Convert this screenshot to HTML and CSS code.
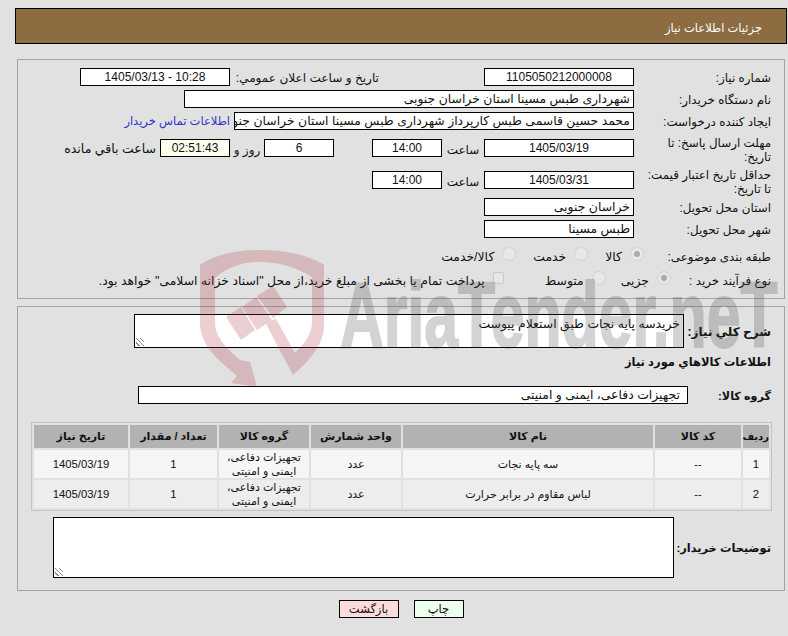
FILE: index.html
```html
<!DOCTYPE html>
<html lang="fa" dir="rtl">
<head>
    <meta charset="UTF-8">
    <title>جزئیات اطلاعات نیاز</title>
    <link rel="stylesheet" href="styles.css">
</head>
<body>
<div class="page">
    <div class="title-bar">جزئیات اطلاعات نیاز</div>

    <div class="panel top-panel">
        <div class="row">
            <label class="lbl">شماره نیاز:</label>
            <div class="box w150 center">1105050212000008</div>
            <label class="lbl-public">تاریخ و ساعت اعلان عمومي:</label>
            <div class="box w150 center">10:28 - 1405/03/13</div>
        </div>
        <div class="row">
            <label class="lbl">نام دستگاه خریدار:</label>
            <div class="box w450">شهرداری طبس مسینا استان خراسان جنوبی</div>
        </div>
        <div class="row">
            <label class="lbl">ایجاد کننده درخواست:</label>
            <div class="box w400">محمد حسین قاسمی طبس کارپرداز شهرداری طبس مسینا استان خراسان جنوبی</div>
            <a class="contact" href="#">اطلاعات تماس خریدار</a>
        </div>
        <div class="row row-tall row-deadline">
            <label class="lbl">مهلت ارسال پاسخ: تا<br>تاریخ:</label>
            <div class="box w150 center">1405/03/19</div>
            <span class="word">ساعت</span>
            <div class="box w70 center">14:00</div>
            <div class="box w70 center days">6</div>
            <span class="word word-days">روز و</span>
            <div class="box w70 center timer">02:51:43</div>
            <span class="word-left">ساعت باقي مانده</span>
        </div>
        <div class="row row-tall row-validity">
            <label class="lbl">حداقل تاریخ اعتبار قیمت:<br>تا تاریخ:</label>
            <div class="box w150 center">1405/03/31</div>
            <span class="word">ساعت</span>
            <div class="box w70 center">14:00</div>
        </div>
        <div class="row">
            <label class="lbl">استان محل تحویل:</label>
            <div class="box w150">خراسان جنوبی</div>
        </div>
        <div class="row">
            <label class="lbl">شهر محل تحویل:</label>
            <div class="box w150">طبس مسینا</div>
        </div>
        <div class="row row-subject">
            <label class="lbl">طبقه بندی موضوعی:</label>
            <span class="radio on"></span><span class="opt">کالا</span>
            <span class="radio"></span><span class="opt">خدمت</span>
            <span class="radio"></span><span class="opt">کالا/خدمت</span>
        </div>
        <div class="row row-process">
            <label class="lbl">نوع فرآیند خرید :</label>
            <span class="radio on"></span><span class="opt">جزیی</span>
            <span class="radio"></span><span class="opt opt-mid">متوسط</span>
            <span class="check"></span><span class="opt">پرداخت تمام یا بخشی از مبلغ خرید،از محل "اسناد خزانه اسلامی" خواهد بود.</span>
        </div>
    </div>

    <div class="panel bottom-panel">
        <div class="desc-row">
            <label class="lbl-bold">شرح کلي نیاز:</label>
            <div class="area area-desc">خریدسه پایه نجات طبق استعلام پیوست<span class="grip"></span></div>
        </div>
        <h4 class="section-title">اطلاعات کالاهاي مورد نیاز</h4>
        <div class="group-row">
            <label class="lbl-bold">گروه کالا:</label>
            <div class="box group-box">تجهیزات دفاعی، ایمنی و امنیتی</div>
        </div>
        <table class="items">
            <thead>
                <tr>
                    <th class="c-num">ردیف</th>
                    <th class="c-code">کد کالا</th>
                    <th class="c-name">نام کالا</th>
                    <th class="c-unit">واحد شمارش</th>
                    <th class="c-group">گروه کالا</th>
                    <th class="c-qty">تعداد / مقدار</th>
                    <th class="c-date">تاریخ نیاز</th>
                </tr>
            </thead>
            <tbody>
                <tr>
                    <td class="num">1</td>
                    <td>--</td>
                    <td>سه پایه نجات</td>
                    <td>عدد</td>
                    <td>تجهیزات دفاعی، ایمنی و امنیتی</td>
                    <td class="num">1</td>
                    <td class="num">1405/03/19</td>
                </tr>
                <tr>
                    <td class="num">2</td>
                    <td>--</td>
                    <td>لباس مقاوم در برابر حرارت</td>
                    <td>عدد</td>
                    <td>تجهیزات دفاعی، ایمنی و امنیتی</td>
                    <td class="num">1</td>
                    <td class="num">1405/03/19</td>
                </tr>
            </tbody>
        </table>
        <div class="buyer-row">
            <label class="lbl-bold">توضیحات خریدار:</label>
            <div class="area area-buyer"><span class="grip"></span></div>
        </div>
    </div>

    <div class="buttons">
        <button type="button" class="btn btn-print">چاپ</button>
        <button type="button" class="btn btn-back">بازگشت</button>
    </div>
</div>

<!-- watermark lies over the form, see-through -->
<div class="watermark">
    <svg class="wm-shield" width="135" height="145" viewBox="195 245 135 145">
        <path d="M260 250 C285 250 308 255 324 265 L324 325 C324 345 308 362 293 375 L265 322 L276 319 L295 353 C305 343 312 334 312 322 L312 277 C296 267 278 262 260 262 C242 262 228 267 215 278 L215 323 C215 337 228 350 240 360 L250 362 L257 387 L231 383 L237 376 C218 360 200 345 200 323 L200 265 C215 255 235 250 260 250 Z"/>
        <path d="M226 317 L241 307 L255 330 L241 340 Z M242 307 L256 297 L272 320 L257 330 Z M257 296 L273 286 L287 307 L273 318 Z"/>
    </svg>
    <span class="wm-text">AriaTender.neT</span>
</div>
</body>
</html>
```

FILE: styles.css
```css
html, body { margin: 0; padding: 0; }
body { background-color: #e1e1e1; font-family: "Liberation Sans", "DejaVu Sans", sans-serif; font-size: 12.4px; color: #111; width: 788px; height: 636px; overflow: hidden; position: relative; }
.page { padding: 8px 3px 0 17px; }

.title-bar { background-color: #8d6c42; border: 1px solid #000; height: 34px; line-height: 38px; color: #fff; font-size: 11.5px; padding-right: 24px; margin: 0 -2px; }

.panel { border: 1px solid #a3a3a3; box-sizing: border-box; }
.top-panel { margin-top: 15px; height: 240px; padding-top: 8px; }
.bottom-panel { margin-top: 7px; height: 285px; }

.row { display: flex; align-items: center; height: 18px; margin-bottom: 4px; }
.row-tall { height: 28px; align-items: flex-start; }
.row-tall .box { margin-top: 4px; }
.row-deadline { margin-top: 5px; }
.row-validity { margin-bottom: 3px; }
.lbl { width: 150px; flex: none; padding: 2px 13px 0 0; box-sizing: border-box; line-height: 14px; font-size: 11.9px; white-space: nowrap; }
.row-tall .lbl { padding-top: 1px; }
.lbl-public { width: 254px; flex: none; padding: 2px 105px 0 0; box-sizing: border-box; white-space: nowrap; font-size: 12.1px; }

.box { background-color: #fff; border: 1px solid #000; height: 18px; line-height: 17px; padding: 0 3px; box-sizing: border-box; white-space: nowrap; flex: none; overflow: hidden; }
.center { text-align: center; font-size: 12px; }
.w150 { width: 150px; }
.w450 { width: 450px; }
.w400 { width: 400px; }
.w70 { width: 70px; }
.contact { color: #3333cc; text-decoration: none; margin-right: 4px; font-size: 11.5px; }
.word { width: 42px; text-align: center; flex: none; line-height: 30px; font-size: 12px; }
.days { margin-right: 38px; }
.word-days { width: 34px; }
.timer { background-color: #fffff0; }
.word-left { margin-right: 4px; line-height: 29px; white-space: nowrap; font-size: 12.5px; }

.row-subject { margin-top: 9px; margin-bottom: 6px; }
.row-subject .lbl { width: 140px; }
.row-process { margin-bottom: 0; }
.row-process .lbl { width: 113px; }
.radio { width: 14px; height: 14px; box-sizing: border-box; border-radius: 50%; background: #e8e8e8; border: 1px solid #d2d2d2; flex: none; position: relative; margin-bottom: 4px; }
.radio.on::after { content: ""; position: absolute; top: 3px; left: 3px; width: 6px; height: 6px; border-radius: 50%; background: #ababab; }
.check { width: 11px; height: 12px; box-sizing: border-box; border: 1px solid #c8c8c8; background: #e6e6e6; border-radius: 2px; margin-bottom: 4px; flex: none; }
.opt { margin-right: 8px; margin-left: 17px; white-space: nowrap; }
.row-process .opt { margin-left: 15px; }
.row-process .opt-mid { margin-left: 41px; }

.desc-row { display: flex; align-items: center; padding-top: 7px; }
.lbl-bold { font-weight: bold; font-size: 12px; padding-right: 13px; flex: none; box-sizing: border-box; white-space: nowrap; }
.desc-row .lbl-bold { width: 100px; padding-top: 2px; }
.area { background: #fff; border: 1px solid #000; position: relative; box-sizing: border-box; flex: none; }
.area-desc { width: 550px; height: 34px; padding: 1px 3px; line-height: 16px; }
.grip { position: absolute; left: 1px; bottom: 1px; width: 8px; height: 8px; background: repeating-linear-gradient(45deg, transparent 0 2px, #888 2px 3px); }
.section-title { margin: 0; font-size: 11.5px; line-height: 14px; padding: 7px 13px 0 0; height: 26px; box-sizing: border-box; }
.group-row { display: flex; align-items: center; margin-top: 12px; }
.group-row .lbl-bold { width: 96px; font-size: 11.2px; padding-top: 2px; }
.group-box { width: 550px; padding: 0 7px 0 0; }

.items { border-collapse: separate; border-spacing: 2px; border: 1px solid #c4c4c4; width: 741px; margin: 18px 12px 0 0; table-layout: fixed; font-size: 11px; }
.items th { background-color: #b2b2b2; height: 23px; padding: 0; font-size: 11px; }
.items th.c-num { font-size: 10px; }
.items td { background-color: #f6f6f6; height: 28px; box-sizing: border-box; padding: 1px 0 0; text-align: center; line-height: 13.5px; }
.items tbody tr:nth-child(2) td { background-color: #ededed; }
.items td.num { font-size: 11.3px; }
.c-num { width: 26px; }
.c-code { width: 86px; }
.c-name { width: 250px; }
.c-unit { width: 90px; }
.c-group { width: 90px; }
.c-qty { width: 87px; }
.c-date { width: 94px; }

.buyer-row { display: flex; align-items: center; margin-top: 6px; }
.buyer-row .lbl-bold { width: 110px; font-size: 11.4px; }
.area-buyer { width: 621px; height: 61px; }

.buttons { display: flex; justify-content: center; gap: 15px; margin-top: 9px; }
.btn { height: 18px; border: 1px solid #000; padding: 0; font: inherit; font-size: 11.5px; color: #111; box-sizing: border-box; }
.btn-print { width: 50px; background-color: #edffed; }
.btn-back { width: 60px; background-color: #ffdcdc; }

.watermark { position: absolute; left: 0; top: 0; width: 788px; height: 636px; pointer-events: none; direction: ltr; overflow: hidden; }
.wm-shield { position: absolute; left: 195px; top: 245px; fill: #b03440; opacity: 0.23; }
.wm-text { position: absolute; left: 340px; top: 269px; font-family: "Liberation Sans", sans-serif; font-weight: bold; font-size: 92px; line-height: 92px; color: #464646; -webkit-text-stroke: 2px #464646; opacity: 0.23; white-space: nowrap; transform: scaleX(0.66); transform-origin: left top; }
```
